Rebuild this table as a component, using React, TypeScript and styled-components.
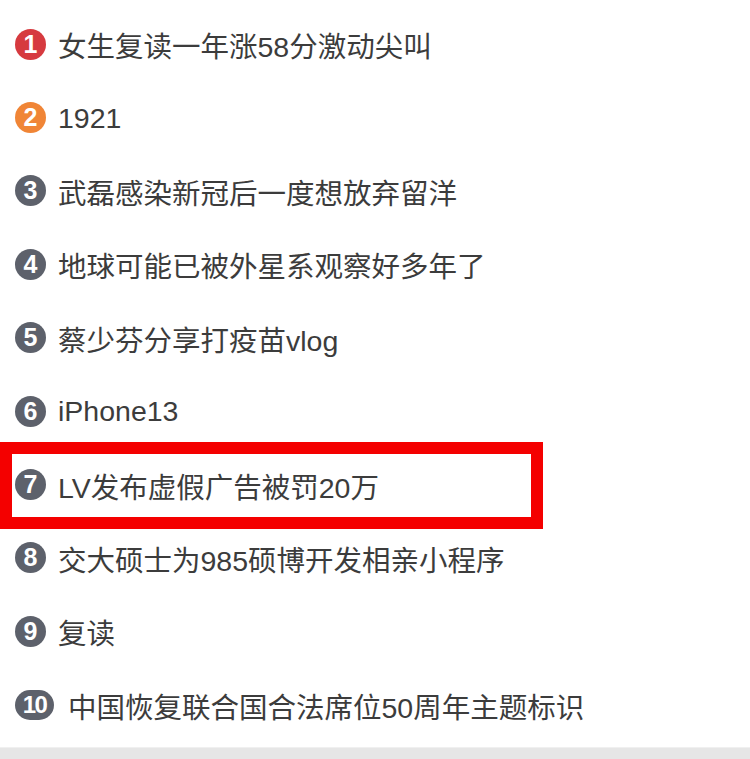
import styled, { createGlobalStyle } from "styled-components";

const GlobalStyle = createGlobalStyle`
  html, body {
    margin: 0;
    padding: 0;
    background: #fff;
  }
  body {
    width: 750px;
    height: 759px;
    overflow: hidden;
  }
`;

const Page = styled.div`
  width: 750px;
  height: 759px;
  display: flex;
  flex-direction: column;
  background: #fff;
`;

const List = styled.ul`
  list-style: none;
  margin: 0;
  padding: 8px 0 0;
  flex: 1;
`;

const Row = styled.li<{ $marked?: boolean }>`
  position: relative;
  height: 73.4px;
  display: flex;
  align-items: center;
  padding-left: 15px;
  gap: 12px;
  font-family: "Liberation Sans", "Noto Sans CJK SC", sans-serif;
  font-size: 28.5px;
  color: #3c3c3c;

  ${({ $marked }) =>
    $marked &&
    `
    &::after {
      content: '';
      position: absolute;
      left: 0;
      top: -6px;
      width: 543px;
      bottom: -7px;
      box-sizing: border-box;
      border: 12px solid #f40000;
      pointer-events: none;
    }
  `}
`;

const Badge = styled.span<{ $color: string; $wide?: boolean }>`
  flex: none;
  width: ${({ $wide }) => ($wide ? "39px" : "31px")};
  height: ${({ $wide }) => ($wide ? "30px" : "31px")};
  border-radius: 16px;
  background: ${({ $color }) => $color};
  color: #fff;
  display: flex;
  align-items: center;
  justify-content: center;
  font-family: "Liberation Sans", Arial, sans-serif;
  font-weight: bold;
  font-size: ${({ $wide }) => ($wide ? "24px" : "25px")};
  letter-spacing: ${({ $wide }) => ($wide ? "-1.5px" : "0")};
  margin-top: -1px;
`;

const Title = styled.span<{ $wide?: boolean }>`
  margin-left: ${({ $wide }) => ($wide ? "2px" : "0")};
  white-space: nowrap;
`;

const BottomBar = styled.div`
  height: 11px;
  background: #e6e6e6;
  border-top: 1px solid #f0f0f0;
`;

const items = [
  "女生复读一年涨58分激动尖叫",
  "1921",
  "武磊感染新冠后一度想放弃留洋",
  "地球可能已被外星系观察好多年了",
  "蔡少芬分享打疫苗vlog",
  "iPhone13",
  "LV发布虚假广告被罚20万",
  "交大硕士为985硕博开发相亲小程序",
  "复读",
  "中国恢复联合国合法席位50周年主题标识",
];

const badgeColor = (i: number) =>
  i === 0 ? "#d63a3f" : i === 1 ? "#f08536" : "#5d616b";

export default function App() {
  return (
    <Page>
      <GlobalStyle />
      <List>
        {items.map((text, i) => (
          <Row key={i} $marked={i === 6}>
            <Badge $color={badgeColor(i)} $wide={i === 9}>
              {i + 1}
            </Badge>
            <Title $wide={i === 9}>{text}</Title>
          </Row>
        ))}
      </List>
      <BottomBar />
    </Page>
  );
}
